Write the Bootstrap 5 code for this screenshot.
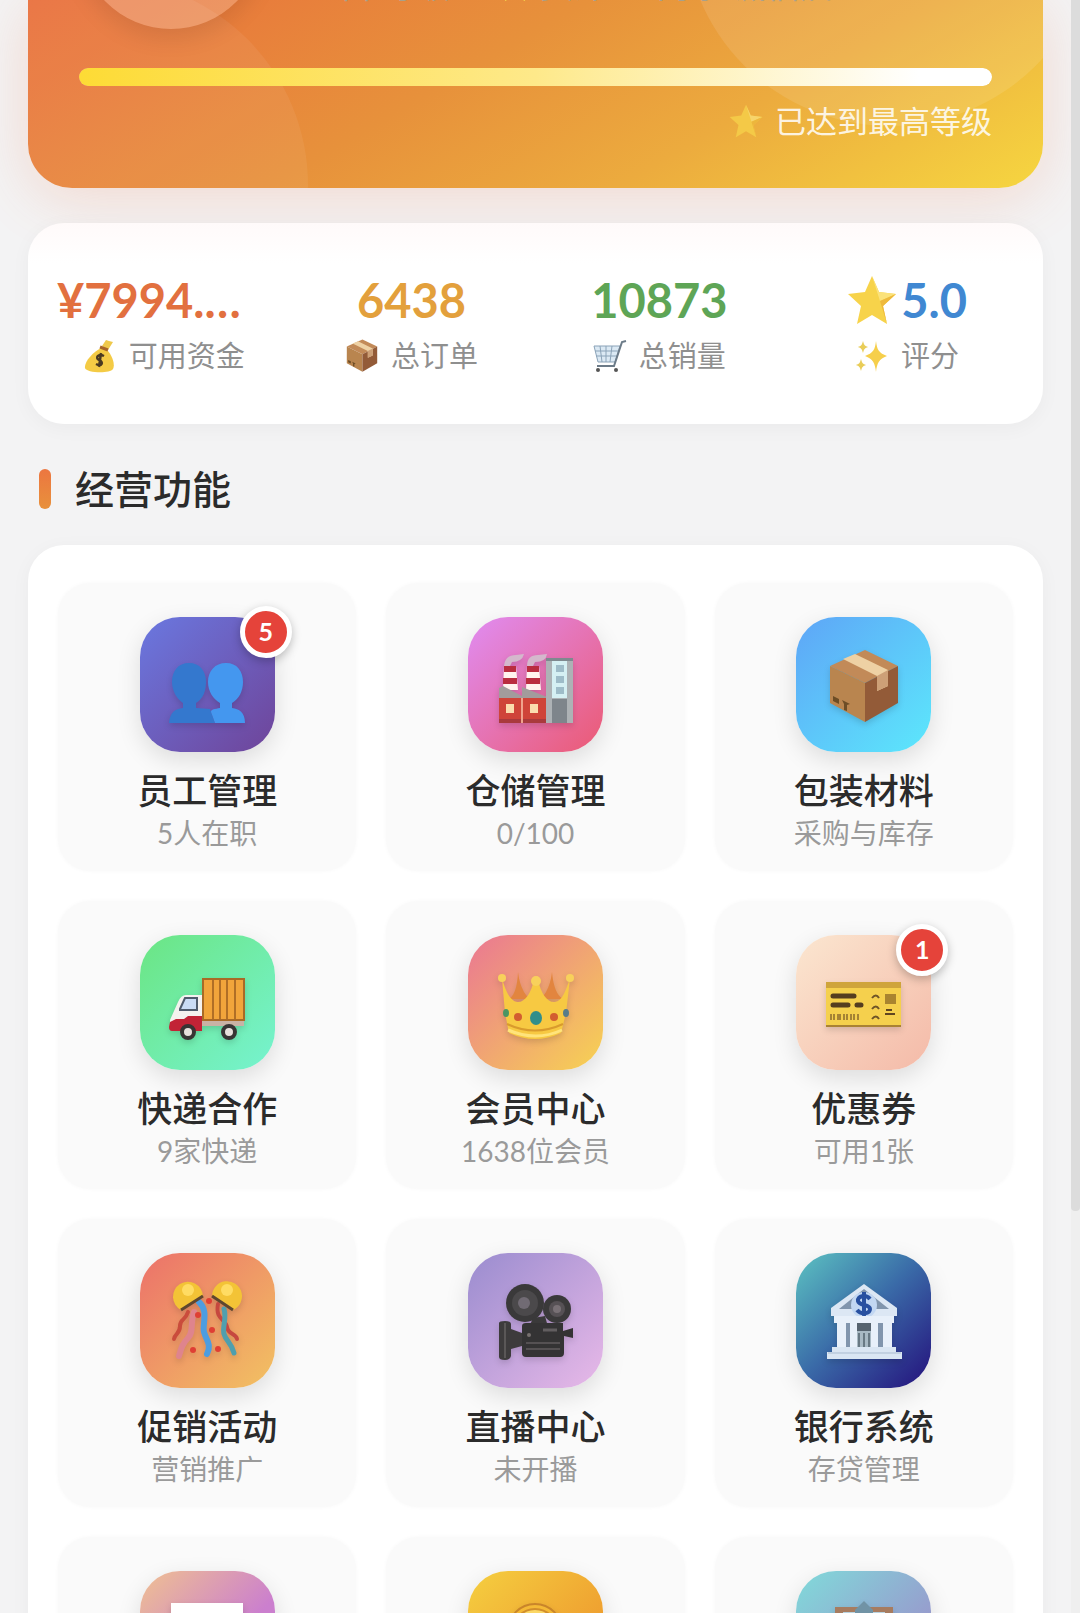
<!DOCTYPE html>
<html lang="zh-CN">
<head>
<meta charset="utf-8">
<meta name="viewport" content="width=device-width, initial-scale=1">
<title>经营中心</title>
<link rel="stylesheet" href="https://cdn.jsdelivr.net/npm/bootstrap@5.3.0/dist/css/bootstrap.min.css">
<style>
body{background:#f3f3f4;font-family:Lato,"Noto Sans CJK SC",sans-serif;color:#2b2b2b}
.app-shell{height:100vh;padding:0 37px 0 28px}
.hero{border-radius:0 0 44px 44px;padding:0 51px 47px;background:linear-gradient(150deg,#e96f3c 0%,#e7913b 42%,#ecab3e 68%,#f6d640 100%)}
.hero-wrap{border-radius:0 0 44px 44px;box-shadow:0 10px 60px rgba(240,110,60,.2)}
.bubble{width:412px;height:412px;border-radius:50%;background:rgba(255,255,255,.06)}
.bubble-left{left:-132px;top:-21px}
.bubble-right{right:-53px;top:-286px;background:rgba(255,255,255,.1)}
.hero-top{height:29px;gap:42px}
.avatar{width:184px;height:184px;border-radius:50%;background:rgba(255,255,255,.2);box-shadow:0 8px 24px rgba(0,0,0,.1)}
.hero-meta{font-size:34px;line-height:44px;margin-bottom:22px;color:#a9a08a;gap:48px}
.level-bar{height:18px;margin-top:39px;border-radius:9px;background:rgba(255,255,255,.3)}
.level-bar .progress-bar{border-radius:9px;background:linear-gradient(90deg,#fddb35,#fee98a 50%,#fff 92%)}
.level-note{font-size:31px;line-height:40px;margin-top:15px;color:rgba(255,255,255,.86);gap:12px}
.panel{background:#fff;border-radius:36px;box-shadow:0 4px 20px rgba(0,0,0,.04)}
.stats{margin-top:35px;padding:49px 12px 48px;background:linear-gradient(#fffafa,#fff 40px)}
.stat{padding:0 17px}
.stat-value{font-size:47px;line-height:56px;font-weight:700}
.stat-label{font-size:29px;line-height:40px;margin-top:8px;color:#8f8f8f;gap:12px}
.section-title{margin:41px 0 32px 11px;font-size:39px;line-height:48px;font-weight:500;gap:24px}
.section-title::before{content:"";width:12px;height:40px;border-radius:6px;background:linear-gradient(#ec7640,#e8913c)}
.features{padding:38px 30px}
.features .row{--bs-gutter-x:30px;--bs-gutter-y:30px}
.tile{background:#fafafa;border-radius:32px;padding:34px 10px 18px;box-shadow:0 0 4px rgba(0,0,0,.03)}
.tile-icon{width:135px;height:135px;border-radius:40px;box-shadow:0 8px 24px rgba(0,0,0,.12)}
.tile-icon svg{width:76px;height:76px;margin-top:4px;overflow:visible;filter:drop-shadow(0 3px 3px rgba(0,0,0,.14))}
.tile-name{margin-top:15px;font-size:35px;line-height:46px;font-weight:500;color:#2b2b2b}
.tile-note{font-size:28px;line-height:40px;color:#9a9a9a}
.count-badge{top:-11px;right:-17px;width:52px;height:52px;border-radius:50%;border:5px solid #fff;background:#e5433a;color:#fff;font-size:25px;font-weight:700;box-shadow:0 3px 10px rgba(0,0,0,.25)}
.scroll-thumb{right:0;top:0;width:9px;height:75.1vh;background:#dcdcdc;border-radius:0 0 4px 4px}
.scroll-track{right:0;top:0;width:9px;background:#efefef}
.i32{width:34px;height:34px}.i48{width:50px;height:50px}
.g-staff{background:linear-gradient(135deg,#6a78e0,#6f4499)}
.g-store{background:linear-gradient(135deg,#e08cf2,#eb5a73)}
.g-pack{background:linear-gradient(135deg,#5ea5f7,#5ce8fc)}
.g-ship{background:linear-gradient(135deg,#6be583,#76f3d0)}
.g-vip{background:linear-gradient(135deg,#ea7793,#f7d352)}
.g-coupon{background:linear-gradient(135deg,#fbe6d0,#f4baa8)}
.g-promo{background:linear-gradient(135deg,#ec716a,#f2c262)}
.g-live{background:linear-gradient(135deg,#9a8ccf,#e8b9e8)}
.g-bank{background:linear-gradient(135deg,#5cc3c2,#3a6ba8 48%,#24107c)}
.g-card{background:linear-gradient(135deg,#f0c191,#cb7fce 60%)}
.g-award{background:linear-gradient(135deg,#f5cf40,#ee9a2e 75%)}
.g-city{background:linear-gradient(135deg,#80dbda,#9a94cc 75%)}
</style>
<script src="https://cdn.jsdelivr.net/npm/bootstrap@5.3.0/dist/js/bootstrap.bundle.min.js"></script>
</head>
<body>
<svg class="d-none" aria-hidden="true">
  <symbol id="star" viewBox="0 0 50 50"><path d="M25 1l7 16 17 2-13 12 4 18-15-9-15 9 4-18L1 19l17-2z" fill="#f7d34a"/><path d="M25 1l7 16 17 2-16 7z" fill="#fbe27a"/><path d="M33 26l16-7-13 12 4 18z" fill="#eeb93c"/></symbol>
  <symbol id="box" viewBox="0 0 76 76"><path d="M4 17L39 1l33 16-33 17z" fill="#c28a58"/><path d="M4 17l35 17v39L4 54z" fill="#b9854f"/><path d="M39 34l33-17v37L39 73z" fill="#935b38"/><path d="M17 10l12-5 33 16v16l-11 5V27z" fill="#eed1a4"/><path d="M51 27l11-6v16l-11 5z" fill="#cda077"/><path d="M7 47l6 3v5l-6-3zM16 51l8 4-3 1v6l-3-1v-6z" fill="#6d4d26"/></symbol>
</svg>
<div class="app-shell position-relative overflow-hidden">
  <header class="hero-wrap">
    <div class="hero position-relative overflow-hidden">
      <div class="bubble bubble-left position-absolute"></div>
      <div class="bubble bubble-right position-absolute"></div>
      <div class="hero-top d-flex align-items-end position-relative">
        <div class="avatar flex-shrink-0"></div>
        <div class="hero-meta d-flex text-nowrap"><span>经营 等级</span><span class="d-flex align-items-center gap-2"><svg class="i32"><use href="#star"/></svg>资深</span><span>商家 诚信店</span></div>
      </div>
      <div class="level-bar progress position-relative" role="progressbar" aria-label="等级进度" aria-valuenow="100" aria-valuemin="0" aria-valuemax="100"><div class="progress-bar w-100"></div></div>
      <div class="level-note d-flex justify-content-end align-items-center position-relative"><svg class="i32 opacity-75" aria-hidden="true"><use href="#star"/></svg><span>已达到最高等级</span></div>
    </div>
  </header>
  <main>
    <section class="panel stats position-relative">
      <div class="row g-0 text-center">
        <div class="col-3 stat"><div class="stat-value text-start text-nowrap" style="color:#e2703f">¥7994.…</div><div class="stat-label d-flex justify-content-center align-items-center"><svg class="i32" viewBox="0 0 34 34" aria-hidden="true"><path d="M19 7l4-6 3 1 4 1-5 8z" fill="#efc94c"/><path d="M18 9c-8 4-17 14-16 20 1 5 25 6 28 1 3-6-3-17-7-20z" fill="#f4cb45"/><path d="M17 8l8 3" stroke="#a8652a" stroke-width="3"/><path d="M21 17c-6-3-9 2-5 4 5 2 3 7-3 4M18 14l-2 14" fill="none" stroke="#493921" stroke-width="2.5"/></svg><span>可用资金</span></div></div>
        <div class="col-3 stat"><div class="stat-value" style="color:#e3a03c">6438</div><div class="stat-label d-flex justify-content-center align-items-center"><svg class="i32" aria-hidden="true"><use href="#box"/></svg><span>总订单</span></div></div>
        <div class="col-3 stat"><div class="stat-value" style="color:#5ea556">10873</div><div class="stat-label d-flex justify-content-center align-items-center"><svg class="i32" viewBox="0 0 34 34" fill="none" aria-hidden="true"><path d="M1 7h26l-5 16H5z" fill="#dbe9f4" stroke="#8ba3b8"/><path d="M2 12h24M3 17h21M7 7l2 16M13 7v16M19 7l-2 16" stroke="#8ba3b8"/><path d="M33 2l-4 1-8 24H4" stroke="#6c7b88" stroke-width="2"/><circle cx="5" cy="31" r="2" fill="#555"/><circle cx="23" cy="31" r="2" fill="#555"/></svg><span>总销量</span></div></div>
        <div class="col-3 stat"><div class="stat-value d-flex justify-content-center align-items-center" style="color:#4088d2"><svg class="i48" aria-hidden="true"><use href="#star"/></svg><span class="ps-1">5.0</span></div><div class="stat-label d-flex justify-content-center align-items-center"><svg class="i32" viewBox="0 0 34 34" aria-hidden="true"><path d="M21 2c1 9 3 12 11 15-8 3-10 7-11 16-1-9-3-13-11-16 8-3 10-6 11-15z" fill="#f6cf4b"/><path d="M8 2c1 4 2 5 5 6-3 1-4 2-5 6-1-4-2-5-5-6 3-1 4-2 5-6zM6 20c1 4 2 5 5 6-3 1-4 2-5 6-1-4-2-5-5-6 3-1 4-2 5-6z" fill="#e9cd58"/></svg><span>评分</span></div></div>
      </div>
    </section>
    <h2 class="section-title d-flex align-items-center">经营功能</h2>
    <section class="panel features">
      <div class="row row-cols-3">
        <div class="col"><a href="#" class="tile d-flex flex-column align-items-center text-decoration-none"><span class="tile-icon g-staff position-relative d-flex align-items-center justify-content-center"><svg viewBox="0 0 76 76" aria-hidden="true"><path d="M20 14c-11 0-17 8-17 19 0 9 5 17 11 21v5C6 60 1 63 0 74h46l-5-14-14-1v-5c7-4 10-12 10-21 0-11-6-19-17-19z" fill="#3478ce"/><path d="M57 14c-11 0-18 8-18 19 0 9 5 17 12 21v5c-5 1-9 1-9 4l4 11h30c0-11-6-14-13-15v-5c7-4 11-12 11-21 0-11-6-19-17-19z" fill="#4497ef"/></svg><span class="count-badge position-absolute d-flex align-items-center justify-content-center">5</span></span><span class="tile-name">员工管理</span><span class="tile-note">5人在职</span></a></div>
        <div class="col"><a href="#" class="tile d-flex flex-column align-items-center text-decoration-none"><span class="tile-icon g-store d-flex align-items-center justify-content-center"><svg viewBox="0 0 76 76" aria-hidden="true"><path d="M7 17q1-11 12-11l8-1q-2 8-12 8l-2 4zM30 17q0-11 11-11l9-1q-1 8-12 8l-2 4z" fill="#d4b8cc"/><path d="M7 17h12l2 24H6zM30 17h12l2 24H29z" fill="#fff3ee"/><path d="M7 17h12v6H7zM6 29h14v6H6zM30 17h12v6H30zM29 29h14v6H29z" fill="#b92d3f"/><path d="M2 39l4-2 19 10V38l25 10v2H2z" fill="#a29b9c"/><path d="M2 49h48v25H2z" fill="#cf4439"/><path d="M2 70h48v4H2z" fill="#a93a3c"/><path d="M25 49v25" stroke="#f0a38d" stroke-width="2"/><path d="M9 55h8v9H9zM33 55h8v9h-8z" fill="#fbdcae"/><path d="M49 9h27v65H49z" fill="#adb2b5"/><path d="M49 9h27v3H49z" fill="#7f898f"/><path d="M55 12h15v37H55z" fill="#d5f0f3"/><path d="M59 16h8v7h-8zM59 27h8v7h-8zM59 38h8v7h-8z" fill="#9ebcc8"/><path d="M55 50h15v24H55z" fill="#7e858b"/></svg></span><span class="tile-name">仓储管理</span><span class="tile-note">0/100</span></a></div>
        <div class="col"><a href="#" class="tile d-flex flex-column align-items-center text-decoration-none"><span class="tile-icon g-pack d-flex align-items-center justify-content-center"><svg viewBox="0 0 76 76" aria-hidden="true"><use href="#box"/></svg></span><span class="tile-name">包装材料</span><span class="tile-note">采购与库存</span></a></div>

        <div class="col"><a href="#" class="tile d-flex flex-column align-items-center text-decoration-none"><span class="tile-icon g-ship d-flex align-items-center justify-content-center"><svg viewBox="0 0 76 76" aria-hidden="true"><path d="M28 53h47v6H28z" fill="#c9b2a5"/><path d="M34 12h41v41H34z" fill="#f1a53b" stroke="#a96a26" stroke-width="2"/><path d="M44 13v39M51 13v39M58 13v39M66 13v39" stroke="#b06f26" stroke-width="2"/><path d="M1 53l8-18q3-7 8-7h16v27H1z" fill="#f4f2ef"/><path d="M1 55l6-3h8l4-3h14v15H3q-3 0-3-4z" fill="#c22336"/><path d="M11 42l5-11h12v12H11z" fill="#cadcf5" stroke="#4f5b6c" stroke-width="2"/><circle cx="19" cy="65" r="6" fill="#e7e0dc" stroke="#383434" stroke-width="4"/><circle cx="60" cy="65" r="6" fill="#e7e0dc" stroke="#383434" stroke-width="4"/></svg></span><span class="tile-name">快递合作</span><span class="tile-note">9家快递</span></a></div>
        <div class="col"><a href="#" class="tile d-flex flex-column align-items-center text-decoration-none"><span class="tile-icon g-vip d-flex align-items-center justify-content-center"><svg viewBox="0 0 76 76" aria-hidden="true"><path d="M12 32q8-5 9-27 3 24 17 30Q52 29 55 5q2 22 11 27" fill="#e2853f"/><path d="M5 11c3 12 8 23 15 24 8 1 14-9 17-22h4c3 13 9 23 17 22 7-1 11-11 15-24l-4 35-5 20q-26 12-52 0L8 46z" fill="#f7c942"/><circle cx="5" cy="11" r="4" fill="#f8d15b"/><circle cx="39" cy="14" r="5" fill="#f8d15b"/><circle cx="73" cy="11" r="4" fill="#f8d15b"/><path d="M10 57q28 13 56 0" fill="none" stroke="#d99b2d" stroke-width="2"/><path d="M11 63q28 12 54 0" fill="none" stroke="#ffe47b" stroke-width="3"/><ellipse cx="39" cy="51" rx="6" ry="7" fill="#318e8b"/><circle cx="21" cy="50" r="4" fill="#d35d30"/><circle cx="57" cy="50" r="4" fill="#d35d30"/><ellipse cx="9" cy="46" rx="3" ry="4" fill="#4a9563"/><ellipse cx="69" cy="46" rx="3" ry="4" fill="#577c89"/></svg></span><span class="tile-name">会员中心</span><span class="tile-note">1638位会员</span></a></div>
        <div class="col"><a href="#" class="tile d-flex flex-column align-items-center text-decoration-none"><span class="tile-icon g-coupon position-relative d-flex align-items-center justify-content-center"><svg viewBox="0 0 76 76" aria-hidden="true"><path d="M0 15h75v45H0z" fill="#f5d04d"/><path d="M0 15h75v6H0z" fill="#cfa43b"/><path d="M0 58h75v2H0z" fill="#a98234"/><path d="M7 29h21M7 38h15M31 38h4" stroke="#553d1f" stroke-width="5" stroke-linecap="round"/><path d="M5 47v6M8 47v6M12 47v6M14 47v6M18 47v6M21 47v6M25 47v6M28 47v6M32 47v6" stroke="#8b6a2d" stroke-width="1.5"/><path d="M46 31q4-5 7 0M46 42q4-5 7 0M46 52q4-5 7 0" fill="none" stroke="#6f5427" stroke-width="2"/><path d="M59 27h11v10H59z" fill="#a9842f"/><path d="M60 43h6M59 47h10" stroke="#604520" stroke-width="2"/></svg><span class="count-badge position-absolute d-flex align-items-center justify-content-center">1</span></span><span class="tile-name">优惠券</span><span class="tile-note">可用1张</span></a></div>

        <div class="col"><a href="#" class="tile d-flex flex-column align-items-center text-decoration-none"><span class="tile-icon g-promo d-flex align-items-center justify-content-center"><svg viewBox="0 0 76 76" aria-hidden="true"><g fill="none" stroke-linecap="round"><path d="M19 27c-3 10-8 6-8 14s-5 7-6 13" stroke="#ca4c3c" stroke-width="4"/><path d="M25 27c-4 11 0 20-6 26s-7 11-9 18" stroke="#df848d" stroke-width="6"/><path d="M30 17c10 9 3 22 5 30s8 12 3 22" stroke="#4c9de1" stroke-width="6"/><path d="M49 19c-3 16 8 15 9 23s9 6 10 12" stroke="#c6483f" stroke-width="4"/><path d="M55 24c3 10-2 18 0 25s7 8 10 19" stroke="#4f9fae" stroke-width="5"/></g><path d="M12 25a15 15 0 1122-14z" fill="#f3c336"/><path d="M43 11a15 15 0 1121 14z" fill="#f3c336"/><circle cx="19" cy="5" r="6" fill="#ffdc63"/><circle cx="58" cy="5" r="6" fill="#ffdc63"/><path d="M12 25l22-14M43 11l21 14" stroke="#5f472f" stroke-width="3"/><g fill="#df3f34"><circle cx="40" cy="16" r="3"/><circle cx="29" cy="30" r="3"/><circle cx="43" cy="45" r="3"/><circle cx="24" cy="65" r="3"/><circle cx="49" cy="64" r="3"/></g></svg></span><span class="tile-name">促销活动</span><span class="tile-note">营销推广</span></a></div>
        <div class="col"><a href="#" class="tile d-flex flex-column align-items-center text-decoration-none"><span class="tile-icon g-live d-flex align-items-center justify-content-center"><svg viewBox="0 0 76 76" aria-hidden="true"><path d="M2 38q0-2 6-2t6 3v5l11 4v13l-11 3v7q-1 4-6 4-6 0-6-3z" fill="#3d3b3c"/><path d="M8 38v35" stroke="#5a5757" stroke-width="2"/><circle cx="28" cy="18" r="19" fill="#3a393a"/><circle cx="28" cy="18" r="13" fill="#4b494b"/><circle cx="27" cy="18" r="6" fill="#716b74"/><circle cx="60" cy="24" r="14" fill="#3a393a"/><circle cx="60" cy="24" r="8" fill="#565155"/><circle cx="60" cy="24" r="4" fill="#787075"/><path d="M36 33l12-2 3 11H32z" fill="#3a393a"/><path d="M25 41q0-3 4-3h37v8l10-3v10l-9-2v17q0 4-4 4H29q-4 0-4-4z" fill="#343334"/><path d="M29 58h34M29 64h34" stroke="#555153" stroke-width="2"/><circle cx="32" cy="50" r="2" fill="#77716f"/><path d="M46 45h14" stroke="#625e60" stroke-width="3"/></svg></span><span class="tile-name">直播中心</span><span class="tile-note">未开播</span></a></div>
        <div class="col"><a href="#" class="tile d-flex flex-column align-items-center text-decoration-none"><span class="tile-icon g-bank d-flex align-items-center justify-content-center"><svg viewBox="0 0 76 76" aria-hidden="true"><path d="M38-1l33 24v8H5v-8z" fill="#dce7f4"/><path d="M38 4l25 20H13z" fill="#8195ad"/><circle cx="38" cy="20" r="13" fill="#c2d7f2"/><path d="M44 14c-4-5-13-3-12 2s12 3 12 8-9 6-13 1M38 7v26" fill="none" stroke="#2850a0" stroke-width="4"/><path d="M8 31h60v7H8z" fill="#e8f0fa"/><path d="M13 38h50v26H13z" fill="#8195ad"/><path d="M29 38h18v26H29z" fill="#a8b9c4"/><path d="M30 38h16v8H30z" fill="#56636f"/><path d="M33 48v15M38 48v15M43 48v15" stroke="#687984" stroke-width="2"/><path d="M11 36h9v27h-9zM24 36h7v27h-7zM45 36h7v27h-7zM57 36h9v27h-9z" fill="#e8f0fa"/><path d="M6 62h64v5h6v7H1v-7h5z" fill="#dae6f3"/><path d="M2 68h73" stroke="#a9bbcf"/></svg></span><span class="tile-name">银行系统</span><span class="tile-note">存贷管理</span></a></div>

        <div class="col"><a href="#" class="tile d-flex flex-column align-items-center text-decoration-none" aria-label="数据报表"><span class="tile-icon g-card d-flex align-items-center justify-content-center"><svg viewBox="0 0 76 76" aria-hidden="true"><path d="M2 0h72v70H2z" fill="#fff"/><path d="M10 58l16-20 14 11 22-30" fill="none" stroke="#489ee0" stroke-width="4"/></svg></span></a></div>
        <div class="col"><a href="#" class="tile d-flex flex-column align-items-center text-decoration-none" aria-label="荣誉成就"><span class="tile-icon g-award d-flex align-items-center justify-content-center"><svg viewBox="0 0 76 76" aria-hidden="true"><circle cx="38" cy="28" r="27" fill="#f4b936" stroke="#c9852a" stroke-width="2"/><circle cx="38" cy="28" r="22" fill="#fbd765" stroke="#d18e2c" stroke-width="2"/></svg></span></a></div>
        <div class="col"><a href="#" class="tile d-flex flex-column align-items-center text-decoration-none" aria-label="任务中心"><span class="tile-icon g-city d-flex align-items-center justify-content-center"><svg viewBox="0 0 76 76" aria-hidden="true"><path d="M9 4h58v70H9z" fill="#a77c60"/><path d="M17 9h42v61H17z" fill="#b9d3e0"/><path d="M29 7l9-9 9 9v6H29z" fill="#7193a5"/></svg></span></a></div>
      </div>
    </section>
  </main>
  <div class="scroll-track position-absolute h-100"></div>
  <div class="scroll-thumb position-absolute"></div>
</div>
</body>
</html>
